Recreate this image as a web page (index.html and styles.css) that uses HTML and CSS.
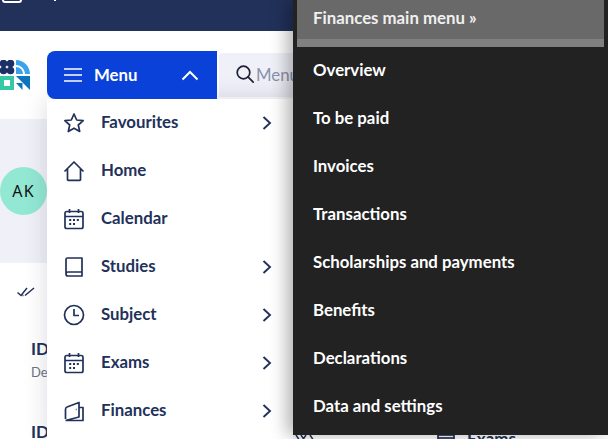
FILE: index.html
```html
<!DOCTYPE html>
<html lang="en">
<head>
<meta charset="utf-8">
<title>Finances menu</title>
<link rel="stylesheet" href="styles.css">
</head>
<body>
<div class="page">
  <div class="topbar"><span class="topbar-box"></span><span class="topbar-dot"></span></div>
  <header class="header">
    <svg class="logo" width="31" height="31" viewBox="0 0 31 31">
      <g fill="#1c2f66">
        <circle cx="3.500" cy="3.500" r="3.800"/><circle cx="10.500" cy="3.500" r="3.800"/>
        <circle cx="3.500" cy="10.500" r="3.800"/><circle cx="10.500" cy="10.500" r="3.800"/>
      </g>
      <path fill="#3aa3ea" d="M16 0c8 0 14 6.500 14 14h-5C25 9.500 21 5 16 5z"/>
      <path fill="#3aa3ea" d="M16 7c4 0 7 3 7 7h-7z"/>
      <path fill="#35c9a5" fill-rule="evenodd" d="M0 16h14v14H0zM4 20v6h6v-6z"/>
      <path fill="#0d74bd" d="M16 16h14v14l-7-7z"/>
      <path fill="#0d74bd" d="M16 23h6.500v7z"/>
    </svg>
    <div class="menu-spacer"></div>
    <div class="search">
      <svg width="20" height="20" viewBox="0 0 20 20" fill="none" stroke="#1b2236" stroke-width="1.700" stroke-linecap="round"><circle cx="8.500" cy="8.500" r="6.300"/><path d="M13.200 13.200l5 5"/></svg>
      <span class="search-text">Menu</span>
    </div>
  </header>
  <section class="hero"><div class="avatar">AK</div></section>
  <section class="card">
    <svg class="checks" width="18" height="10" viewBox="0 0 18 10" fill="none" stroke="#22315a" stroke-width="1.500"><path d="M0.500 5.500l3.500 3L10 1M8 8.500L17 1M5.500 8.500l1 0"/></svg>
    <div class="card-item"><b>ID</b><span>De</span></div>
    <div class="card-item"><b>ID</b></div>
    <svg class="behind-left" width="20" height="8" viewBox="0 0 20 8" fill="none" stroke="#22315a" stroke-width="1.500"><path d="M1 0l4 6M6 0l4 6M11 0l-4 6M15 0l4 6"/></svg>
    <div class="behind">
      <svg class="behind-ico" width="18" height="18" viewBox="0 0 18 18" fill="none" stroke="#22315a" stroke-width="1.700"><rect x="1" y="1" width="16" height="16"/><path d="M1 4h16"/></svg>
      <span>Exams</span>
    </div>
  </section>

  <nav class="menu">
    <div class="menu-button">
      <svg width="20" height="14" viewBox="0 0 20 14" stroke="#fff" stroke-width="1.700"><path d="M1 1h18M1 7h18M1 13h18"/></svg>
      <span class="menu-button-label">Menu</span>
      <svg class="menu-up" width="18" height="11" viewBox="0 0 18 11" fill="none" stroke="#fff" stroke-width="2"><path d="M1.500 9.500L9 2l7.500 7.500"/></svg>
    </div>
    <ul class="menu-list">
      <li class="menu-row">
        <svg class="ico" viewBox="0 0 22 22"><path d="M11 2l2.700 6 6.500.7-4.900 4.300 1.400 6.500L11 16.200 5.300 19.500l1.400-6.500-4.900-4.300 6.500-.7z"/></svg>
        <span class="label">Favourites</span>
        <svg class="chev" viewBox="0 0 10 14"><path d="M1.500 1l6.500 6-6.500 6"/></svg>
      </li>
      <li class="menu-row">
        <svg class="ico" viewBox="0 0 22 22"><path d="M1.500 11.500L11 2l9.500 9.500M4.500 9v10.500a.8.800 0 0 0 .8.800h11.400a.8.800 0 0 0 .8-.800V9"/></svg>
        <span class="label">Home</span>
      </li>
      <li class="menu-row">
        <svg class="ico" viewBox="0 0 22 22"><use href="#cal"/></svg>
        <span class="label">Calendar</span>
      </li>
      <li class="menu-row">
        <svg class="ico" viewBox="0 0 22 22"><path d="M3 17.500V3.500A1.500 1.500 0 0 1 4.500 2H19v14H5a2 2 0 0 0-2 2 2 2 0 0 0 2 2h14v-4"/></svg>
        <span class="label">Studies</span>
        <svg class="chev" viewBox="0 0 10 14"><path d="M1.500 1l6.500 6-6.500 6"/></svg>
      </li>
      <li class="menu-row">
        <svg class="ico" viewBox="0 0 22 22"><circle cx="11" cy="11" r="9.500"/><path d="M11 5v6.500h5"/></svg>
        <span class="label">Subject</span>
        <svg class="chev" viewBox="0 0 10 14"><path d="M1.500 1l6.500 6-6.500 6"/></svg>
      </li>
      <li class="menu-row">
        <svg class="ico" viewBox="0 0 22 22"><use href="#cal"/></svg>
        <span class="label">Exams</span>
        <svg class="chev" viewBox="0 0 10 14"><path d="M1.500 1l6.500 6-6.500 6"/></svg>
      </li>
      <li class="menu-row">
        <svg class="ico" viewBox="0 0 22 22"><path d="M2.500 19V9.500Q2.500 7.500 4 7L16 2.500V17L2.500 20.500M16 7.500h4v13H3.500"/><path d="M12.800 9.500h.8"/></svg>
        <span class="label">Finances</span>
        <svg class="chev" viewBox="0 0 10 14"><path d="M1.500 1l6.500 6-6.500 6"/></svg>
      </li>
    </ul>
  </nav>

  <aside class="flyout">
    <div class="flyout-head">Finances main menu »</div>
    <ul class="flyout-list">
      <li>Overview</li>
      <li>To be paid</li>
      <li>Invoices</li>
      <li>Transactions</li>
      <li>Scholarships and payments</li>
      <li>Benefits</li>
      <li>Declarations</li>
      <li>Data and settings</li>
    </ul>
  </aside>

  <svg class="defs" width="0" height="0">
    <symbol id="cal" viewBox="0 0 22 22">
      <rect x="2" y="3.500" width="18" height="17" rx="1.800"/>
      <path d="M2 8.500h18M6.500 1v4M15.500 1v4"/>
      <path class="dots" d="M6.200 12h2M10 12h2M13.800 12h2M6.200 16h2M10 16h2"/>
    </symbol>
  </svg>
</div>
</body>
</html>
```
FILE: styles.css
```css
* { box-sizing: border-box; }
html, body { margin: 0; padding: 0; }
body { width: 608px; height: 439px; overflow: hidden; font-family: "Lato", "Liberation Sans", sans-serif; background: #fff; }
ul { list-style: none; margin: 0; padding: 0; }

.page { position: relative; width: 608px; height: 439px; overflow: hidden; display: flex; flex-direction: column; }

.topbar { height: 31px; background: #22315a; flex: none; position: relative; }
.topbar-box { position: absolute; left: 2px; top: -8px; width: 20px; height: 11px; border: 2px solid #fff; border-radius: 3px; }
.topbar-dot { position: absolute; left: 54px; top: 0; width: 2px; height: 1px; background: #fff; }

.header { height: 88px; flex: none; background: #fff; display: flex; align-items: flex-start; padding-top: 22px; }
.logo { margin: 7px 0 0 0; flex: none; }
.menu-spacer { width: 188px; flex: none; }
.search { width: 120px; height: 44px; flex: none; background: #f0f0f8; border-radius: 4px 0 0 0; display: flex; align-items: center; gap: 1px; padding: 0 0 2px 16px; }
.search-text { font-size: 16.800px; color: #8a93ad; }

.hero { height: 144px; flex: none; background: #f0f0f8; display: flex; align-items: flex-start; }
.avatar { width: 47px; height: 48px; margin-top: 48px; border-radius: 50%; background: #92e8d3; display: flex; align-items: center; justify-content: center; font-size: 16px; letter-spacing: 1.200px; color: #111; font-family: "Noto Sans", sans-serif; }

.card { flex: 1; background: #fff; border-radius: 6px 0 0 0; padding: 24px 0 0 17px; position: relative; }
.checks { display: block; }
.card-item { margin: 42px 0 0 14px; font-size: 17px; line-height: 20px; color: #22315a; display: flex; flex-direction: column; }
.card-item b { font-weight: 700; }
.card-item span { font-size: 13px; line-height: 20px; color: #6d7280; margin-top: 3px; }
.card-item + .card-item { margin-top: 40px; }
.behind { position: absolute; left: 437px; top: 171px; display: flex; align-items: flex-start; gap: 12px; font-weight: 700; font-size: 17px; line-height: 10px; color: #22315a; }
.behind-ico { flex: none; }
.behind-left { position: absolute; left: 295px; top: 172px; }

.menu { position: absolute; left: 47px; top: 51px; width: 246px; height: 388px; }
.menu-button { position: relative; z-index: 1; width: 170px; height: 48px; background: #0a41d8; border-radius: 8px 0 0 8px; display: flex; align-items: center; padding: 0 18px 0 16px; color: #fff; }
.menu-button-label { margin: 0 0 2px 11px; font-weight: 700; font-size: 16.800px; }
.menu-up { margin-left: auto; }
.menu-list { display: flex; flex-direction: column; background: #fff; height: 340px; box-shadow: 0 0 22px rgba(30, 30, 60, .16); }
.menu-row { height: 48px; display: flex; align-items: center; padding-left: 16px; color: #22315a; font-weight: 700; font-size: 16.800px; }
.ico { width: 22px; height: 22px; flex: none; fill: none; stroke: #22315a; stroke-width: 1.700; stroke-linejoin: round; overflow: visible; }
.dots { stroke-width: 1.800; }
.label { margin: 0 0 3px 16px; }
.chev { width: 10px; height: 14px; margin-left: auto; margin-right: 21px; flex: none; fill: none; stroke: #22315a; stroke-width: 1.900; }

.defs { position: absolute; }

.flyout { position: absolute; left: 293px; top: 0; width: 315px; height: 435px; background: #222; padding: 0 4px; box-shadow: -6px 0 16px rgba(0, 0, 0, .3); color: #fff; font-weight: 700; font-size: 16.800px; }
.flyout-head { height: 47px; background: #696969; border-bottom: 8px solid #808080; padding: 0 16px; line-height: 36px; color: #f0f0f0; }
.flyout-list li { height: 48px; line-height: 46px; padding: 0 16px; }
```
